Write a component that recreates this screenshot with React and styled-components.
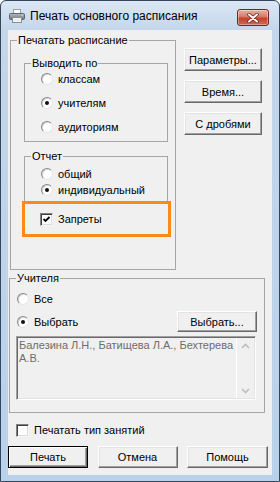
import React from 'react';
import styled, { createGlobalStyle } from 'styled-components';

const GlobalStyle = createGlobalStyle`
  html, body {
    margin: 0;
    padding: 0;
    background: #fff;
  }
  body {
    font-family: "Liberation Sans", Arial, sans-serif;
    font-size: 11px;
    color: #000;
  }
`;

const Frame = styled.div`
  width: 280px;
  height: 482px;
  box-sizing: border-box;
  border: 1px solid #34475c;
  border-radius: 6px 6px 0 0;
  background: linear-gradient(#dbe7f4, #c3d6eb 30px, #b9d1ea);
  padding: 0 7px 6px;
  display: flex;
  flex-direction: column;
  overflow: hidden;
`;

const TitleBar = styled.div`
  height: 29px;
  margin: 0 -7px;
  padding: 0 10px 0 8px;
  display: flex;
  align-items: center;
  flex-shrink: 0;
`;

const Caption = styled.span`
  flex: 1;
  margin-left: 5px;
  font-size: 12px;
  color: #000;
  white-space: nowrap;
`;

const CloseButton = styled.div`
  align-self: flex-start;
  margin-top: 8px;
  width: 32px;
  height: 17px;
  box-sizing: border-box;
  border: 1px solid #6b2b22;
  border-radius: 3px;
  background: linear-gradient(#eab0a3, #d77a66 45%, #c2422d 55%, #cf6a52);
  box-shadow: inset 0 0 0 1px rgba(255, 255, 255, 0.35);
  display: flex;
  align-items: center;
  justify-content: center;
`;

const Client = styled.div`
  flex: 1;
  background: #f0f0f0;
  padding-top: 4px;
  display: flex;
  flex-direction: column;
`;

const TopRow = styled.div`
  display: flex;
  align-items: flex-start;
`;

const Group = styled.fieldset`
  margin: ${p => p.$m || '0'};
  padding: ${p => `${p.$pt || 0}px ${p.$pr || 0}px ${p.$pb || 0}px ${p.$pl || 0}px`};
  width: ${p => (p.$w ? `${p.$w}px` : 'auto')};
  height: ${p => (p.$h ? `${p.$h}px` : 'auto')};
  box-sizing: border-box;
  min-width: 0;
  border: 1px solid #a5a5a5;
  position: relative;

  & > legend {
    margin-left: ${p => 6 - (p.$pl || 0)}px;
  }
`;

const Legend = styled.legend`
  padding: 0 1px;
  line-height: 13px;
  font-size: 11px;
`;

const OptionList = styled.div`
  display: flex;
  flex-direction: column;
  margin-top: ${p => p.$mt || 0}px;
  padding-left: ${p => p.$pl || 0}px;
`;

const Option = styled.label`
  display: flex;
  align-items: center;
  gap: 5px;
  height: ${p => p.$h || 16}px;
  white-space: nowrap;
`;

const Radio = styled.span`
  width: 12px;
  height: 12px;
  box-sizing: border-box;
  border-radius: 50%;
  border: 1px solid;
  border-color: #8a8a8a #e6e6e6 #e6e6e6 #8a8a8a;
  background: radial-gradient(circle at 60% 60%, #fff 55%, #e4e4e4);
  box-shadow: inset 1px 1px 0 #5f5f5f33;
  display: flex;
  align-items: center;
  justify-content: center;
  flex-shrink: 0;

  &::after {
    content: '';
    width: 4px;
    height: 4px;
    border-radius: 50%;
    background: #111;
    display: ${p => (p.$checked ? 'block' : 'none')};
  }
`;

const CheckBox = styled.span`
  width: 13px;
  height: 13px;
  box-sizing: border-box;
  border: 1px solid;
  border-color: #808080 #f4f4f4 #f4f4f4 #808080;
  box-shadow: inset 1px 1px 0 #404040, inset -1px -1px 0 #dcdcdc;
  background: #fff;
  display: flex;
  align-items: center;
  justify-content: center;
  flex-shrink: 0;
`;

const Highlight = styled.div`
  position: relative;
  margin: 3px -4px -2px -3px;
  height: 36px;
  box-sizing: border-box;
  border: 3px solid #fb8a16;
  padding-left: 15px;
  display: flex;
  align-items: center;
  background: #f0f0f0;
`;

const SideButtons = styled.div`
  display: flex;
  flex-direction: column;
  gap: 9px;
  margin: 14px 0 0 8px;
`;

const Button = styled.button`
  width: ${p => p.$w || 78}px;
  height: ${p => p.$h || 23}px;
  margin: 0;
  padding: 0;
  font-family: inherit;
  font-size: 11px;
  color: #000;
  background: #f0f0f0;
  box-sizing: border-box;
  border: 1px solid;
  border-color: ${p => (p.$default ? '#000' : '#fff #696969 #696969 #fff')};
  box-shadow: ${p =>
    p.$default
      ? 'inset 1px 1px 0 #fff, inset -1px -1px 0 #696969, inset -2px -2px 0 #a0a0a0'
      : 'inset -1px -1px 0 #a0a0a0, inset 1px 1px 0 #e3e3e3'};
`;

const ChooseRow = styled.div`
  display: flex;
  align-items: center;
  justify-content: space-between;
  height: 21px;
  margin-top: 1px;
`;

const NamesBox = styled.div`
  margin: 4px 1px 0 -1px;
  height: 64px;
  box-sizing: border-box;
  border: 1px solid;
  border-color: #a0a0a0 #fff #fff #a0a0a0;
  box-shadow: inset 1px 1px 0 #696969, inset -1px -1px 0 #e3e3e3;
  display: flex;
  background: #f0f0f0;
`;

const NamesText = styled.div`
  flex: 1;
  padding: 2px 0 0 2px;
  line-height: 13px;
  color: #6d6d6d;
`;

const ScrollTrack = styled.div`
  width: 17px;
  margin: 1px 1px 1px 0;
  border-left: 1px solid #fff;
  display: flex;
  flex-direction: column;
  justify-content: space-between;
  align-items: center;
  padding: 5px 0 4px;
`;

const FooterCheck = styled.label`
  display: flex;
  align-items: center;
  gap: 5px;
  height: 16px;
  margin-top: 9px;
  padding-left: 8px;
`;

const BottomRow = styled.div`
  display: flex;
  justify-content: space-between;
  width: 260px;
  margin-top: 8px;
`;

const PrinterIcon = () => (
  <svg width="16" height="16" viewBox="0 0 16 16">
    <defs>
      <linearGradient id="pb" x1="0" y1="0" x2="0" y2="1">
        <stop offset="0" stopColor="#b4bcc5" />
        <stop offset="1" stopColor="#6d7680" />
      </linearGradient>
    </defs>
    <rect x="4.5" y="1.5" width="7" height="5" fill="#fff" stroke="#9aa0a6" />
    <rect x="0.5" y="5.5" width="15" height="6" rx="1" fill="url(#pb)" stroke="#5f666e" />
    <rect x="3.5" y="9.5" width="9" height="5" fill="#eef0f2" stroke="#8a9097" />
    <rect x="12" y="7" width="2" height="1" fill="#9be29b" />
  </svg>
);

const CloseGlyph = () => (
  <svg width="12" height="10" viewBox="0 0 12 10">
    <path d="M2 1.5 L10 8.5 M10 1.5 L2 8.5" stroke="#5a2018" strokeWidth="3.4" strokeLinecap="round" />
    <path d="M2 1.5 L10 8.5 M10 1.5 L2 8.5" stroke="#fff" strokeWidth="2" strokeLinecap="round" />
  </svg>
);

const Tick = () => (
  <svg width="9" height="9" viewBox="0 0 9 9">
    <path d="M1.5 4 L3.5 6 L7.5 2" stroke="#000" strokeWidth="1.8" fill="none" />
  </svg>
);

const Chevron = ({ down }) => (
  <svg width="9" height="6" viewBox="0 0 9 6">
    <path d={down ? 'M1 1 L4.5 4.5 L8 1' : 'M1 5 L4.5 1.5 L8 5'} stroke="#bdbdbd" strokeWidth="1.6" fill="none" />
  </svg>
);

export default function App() {
  return (
    <>
      <GlobalStyle />
      <Frame>
        <TitleBar>
          <PrinterIcon />
          <Caption>Печать основного расписания</Caption>
          <CloseButton>
            <CloseGlyph />
          </CloseButton>
        </TitleBar>
        <Client>
          <TopRow>
            <Group $m="0 0 0 2px" $w={166} $h={236} $pt={10} $pl={13} $pr={7}>
              <Legend>Печатать расписание</Legend>
              <Group $pl={0} $pb={2}>
                <Legend>Выводить по</Legend>
                <OptionList $mt={-3} $pl={16}>
                  <Option $h={24}><Radio />классам</Option>
                  <Option $h={24}><Radio $checked />учителям</Option>
                  <Option $h={24}><Radio />аудиториям</Option>
                </OptionList>
              </Group>
              <Group $m="8px 0 0 0" $pl={0}>
                <Legend>Отчет</Legend>
                <OptionList $mt={3} $pl={16}>
                  <Option><Radio />общий</Option>
                  <Option><Radio $checked />индивидуальный</Option>
                </OptionList>
                <Highlight>
                  <Option>
                    <CheckBox><Tick /></CheckBox>
                    Запреты
                  </Option>
                </Highlight>
              </Group>
            </Group>
            <SideButtons>
              <Button>Параметры...</Button>
              <Button>Время...</Button>
              <Button>С дробями</Button>
            </SideButtons>
          </TopRow>
          <Group $m="2px 0 0 1px" $w={256} $pt={3} $pl={7} $pr={7} $pb={12}>
            <Legend>Учителя</Legend>
            <Option $h={22}><Radio />Все</Option>
            <ChooseRow>
              <Option><Radio $checked />Выбрать</Option>
              <Button $w={80} $h={21}>Выбрать...</Button>
            </ChooseRow>
            <NamesBox>
              <NamesText>
                Балезина Л.Н., Батищева Л.А., Бехтерева
                <br />
                А.В.
              </NamesText>
              <ScrollTrack>
                <Chevron />
                <Chevron down />
              </ScrollTrack>
            </NamesBox>
          </Group>
          <FooterCheck>
            <CheckBox />
            Печатать тип занятий
          </FooterCheck>
          <BottomRow>
            <Button $w={80} $h={22} $default>Печать</Button>
            <Button $w={80} $h={22}>Отмена</Button>
            <Button $w={81} $h={22}>Помощь</Button>
          </BottomRow>
        </Client>
      </Frame>
    </>
  );
}
